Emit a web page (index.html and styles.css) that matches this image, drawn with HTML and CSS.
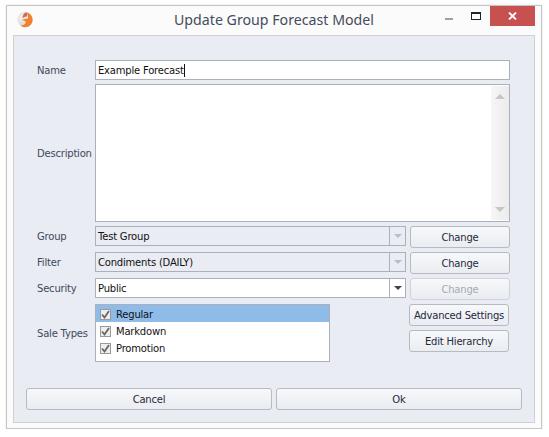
FILE: index.html
```html
<!DOCTYPE html>
<html lang="en">
<head>
  <meta charset="UTF-8">
  <meta name="viewport" content="width=device-width, initial-scale=1.0">
  <title>Update Group Forecast Model</title>
  <link rel="stylesheet" href="styles.css">
</head>
<body>
  <div class="window">
    <div class="titlebar">
      <svg class="app-icon" width="16" height="17" viewBox="0 0 16 17">
        <defs>
          <radialGradient id="ball" cx="0.35" cy="0.4" r="0.7">
            <stop offset="0" stop-color="#f8f6f4"/>
            <stop offset="1" stop-color="#cfc9c5"/>
          </radialGradient>
        </defs>
        <circle cx="8" cy="8.5" r="7.5" fill="url(#ball)"/>
        <path d="M9.5 1.2C13 2 15.6 5 15.6 8.7C15.6 13 12.4 16.2 8.2 16.2C6.4 16.2 4.6 15.6 3.4 14.4C6.2 14.6 8.4 13.6 8.6 11.6C8.7 10 7.2 9.2 4.8 9.2C6 7.8 9.4 7.4 11 7.8C11.4 5.6 10.8 3 9.5 1.2Z" fill="#f0822f"/>
        <path d="M9.2 1.2C10.4 2.8 10.4 4.6 9.6 5.4C8 5.8 6.4 6.4 5.4 7.4C5.4 4.6 6.8 2.4 9.2 1.2Z" fill="#cf6a55"/>
      </svg>
      <div class="title">Update Group Forecast Model</div>
      <div class="win-btns">
        <span class="win-min"></span>
        <span class="win-max"></span>
        <span class="win-close">
          <svg width="9" height="8" viewBox="0 0 9 8"><path d="M1 .5L8 7.5M8 .5L1 7.5" stroke="#fff" stroke-width="1.8" fill="none"/></svg>
        </span>
      </div>
    </div>

    <div class="panel">
      <div class="form">
        <label class="lbl lbl-top">Name</label>
        <div class="input wide">Example Forecast<span class="caret"></span></div>

        <label class="lbl">Description</label>
        <div class="input wide memo">
          <div class="scrollbar">
            <span class="arrow-up"></span>
            <span class="arrow-down"></span>
          </div>
        </div>

        <label class="lbl lbl-top">Group</label>
        <div class="input combo disabled">
          <span class="combo-text">Test Group</span>
          <span class="combo-btn"><span class="arrow-small"></span></span>
        </div>
        <button class="btn">Change</button>

        <label class="lbl lbl-top">Filter</label>
        <div class="input combo disabled">
          <span class="combo-text">Condiments (DAILY)</span>
          <span class="combo-btn"><span class="arrow-small"></span></span>
        </div>
        <button class="btn">Change</button>

        <label class="lbl lbl-top">Security</label>
        <div class="input combo">
          <span class="combo-text">Public</span>
          <span class="combo-btn"><span class="arrow-small dark"></span></span>
        </div>
        <button class="btn btn-off">Change</button>

        <label class="lbl">Sale Types</label>
        <div class="sale-row">
          <ul class="checklist">
            <li class="selected"><span class="check"><svg width="9" height="9" viewBox="0 0 9 9"><path d="M1 4.5L3.5 7.5L8 1" stroke="#666" stroke-width="1.8" fill="none"/></svg></span>Regular</li>
            <li><span class="check"><svg width="9" height="9" viewBox="0 0 9 9"><path d="M1 4.5L3.5 7.5L8 1" stroke="#666" stroke-width="1.8" fill="none"/></svg></span>Markdown</li>
            <li><span class="check"><svg width="9" height="9" viewBox="0 0 9 9"><path d="M1 4.5L3.5 7.5L8 1" stroke="#666" stroke-width="1.8" fill="none"/></svg></span>Promotion</li>
          </ul>
          <div class="side-btns">
            <button class="btn">Advanced Settings</button>
            <button class="btn">Edit Hierarchy</button>
          </div>
        </div>
      </div>

      <div class="footer">
        <button class="btn">Cancel</button>
        <button class="btn">Ok</button>
      </div>
    </div>
  </div>
</body>
</html>
```

FILE: styles.css
```css
body {
  margin: 0;
  background-color: white;
  font-family: "DejaVu Sans", sans-serif;
  font-size: 10px;
  letter-spacing: -0.2px;
  color: #1e2a3a;
}
.window {
  width: 536px;
  height: 424px;
  margin: 5px 0 0 6px;
  box-sizing: border-box;
  border: 1px solid #c6c6c6;
  background-color: #fbfbfb;
  padding: 0 6px 6px 6px;
  display: flex;
  flex-direction: column;
  box-shadow: 0 0 2px #ddd;
}
.titlebar {
  height: 29px;
  display: flex;
  align-items: center;
  position: relative;
  flex-shrink: 0;
}
.app-icon {
  margin: 0 0 2px 4px;
}
.title {
  flex: 1;
  text-align: center;
  font-family: "Noto Sans", sans-serif;
  font-size: 14.2px;
  letter-spacing: 0;
  color: #444d5c;
  margin: 0 0 2px -20px;
}
.win-btns {
  position: absolute;
  top: 0;
  right: 0;
  display: flex;
}
.win-min {
  width: 8px;
  height: 2px;
  background-color: #a0a0a0;
  margin: 12px 18px 0 0;
}
.win-max {
  width: 8px;
  height: 5px;
  border: 1px solid #222;
  border-top-width: 2px;
  margin: 6px 9px 0 0;
}
.win-close {
  width: 45px;
  height: 20px;
  background-color: #c75050;
  display: flex;
  align-items: center;
  justify-content: center;
}
.panel {
  flex: 1;
  border: 1px solid #d0d0d0;
  background-color: #e9ecf2;
  padding: 24px 12px 12px 12px;
  display: flex;
  flex-direction: column;
}
.form {
  display: grid;
  grid-template-columns: 58px 311px 104px;
  row-gap: 4px;
  padding-left: 11px;
}
.lbl {
  color: #3d4a5c;
  display: flex;
  align-items: center;
}
.lbl-top {
  height: 20px;
}
.input {
  box-sizing: border-box;
  height: 20px;
  background-color: white;
  border: 1px solid #abb0bb;
  color: #111;
  padding-left: 2px;
  display: flex;
  align-items: center;
}
.wide {
  grid-column: 2 / 4;
}
.caret {
  width: 1px;
  height: 13px;
  background-color: #111;
}
.memo {
  height: 138px;
  padding: 0;
  justify-content: flex-end;
  align-items: stretch;
}
.scrollbar {
  width: 18px;
  margin: 1px 0;
  background: linear-gradient(to right, #f6f6f6, #ececec);
  display: flex;
  flex-direction: column;
  justify-content: space-between;
  align-items: center;
  padding: 8px 0;
  box-sizing: border-box;
}
.arrow-up {
  border-left: 5px solid transparent;
  border-right: 5px solid transparent;
  border-bottom: 5px solid #c6c6c6;
}
.arrow-down {
  border-left: 5px solid transparent;
  border-right: 5px solid transparent;
  border-top: 5px solid #c6c6c6;
}
.combo {
  padding: 0;
  justify-content: space-between;
  align-self: start;
}
.combo-text {
  padding-left: 2px;
}
.combo-btn {
  width: 15px;
  height: 100%;
  border-left: 1px solid #abb0bb;
  display: flex;
  align-items: center;
  justify-content: center;
}
.arrow-small {
  border-left: 4px solid transparent;
  border-right: 4px solid transparent;
  border-top: 4px solid #b9bcc2;
}
.arrow-small.dark {
  border-top-color: #444;
}
.disabled {
  background-color: #e9ecf2;
}
.btn {
  box-sizing: border-box;
  height: 22px;
  padding: 0;
  border: 1px solid #b6bac2;
  border-radius: 3px;
  background: linear-gradient(to bottom, #f7f8fa, #e9ecf1);
  font-family: "DejaVu Sans", sans-serif;
  font-size: 10px;
  letter-spacing: -0.2px;
  color: #1e2a3a;
}
.form > .btn {
  margin-left: 4px;
}
.btn-off {
  color: #a6abb3;
  border-color: #d0d3d9;
}
.sale-row {
  grid-column: 2 / 4;
  display: flex;
  justify-content: space-between;
}
.checklist {
  list-style: none;
  margin: 0;
  padding: 0;
  box-sizing: border-box;
  width: 235px;
  height: 58px;
  background-color: white;
  border: 1px solid #abb0bb;
  color: #111;
}
.checklist li {
  height: 17px;
  padding-top: 1px;
  box-sizing: border-box;
  display: flex;
  align-items: center;
}
.checklist .selected {
  background-color: #8fbbe8;
}
.check {
  box-sizing: border-box;
  width: 11px;
  height: 11px;
  margin: 0 5px 0 4px;
  background-color: #eee;
  border: 1px solid #9a9a9a;
  display: flex;
  align-items: center;
  justify-content: center;
}
.side-btns {
  width: 100px;
  margin-right: 1px;
  display: flex;
  flex-direction: column;
  gap: 4px;
}
.footer {
  margin-top: 26px;
  display: flex;
  gap: 4px;
}
.footer .btn {
  flex: 1;
}
```
